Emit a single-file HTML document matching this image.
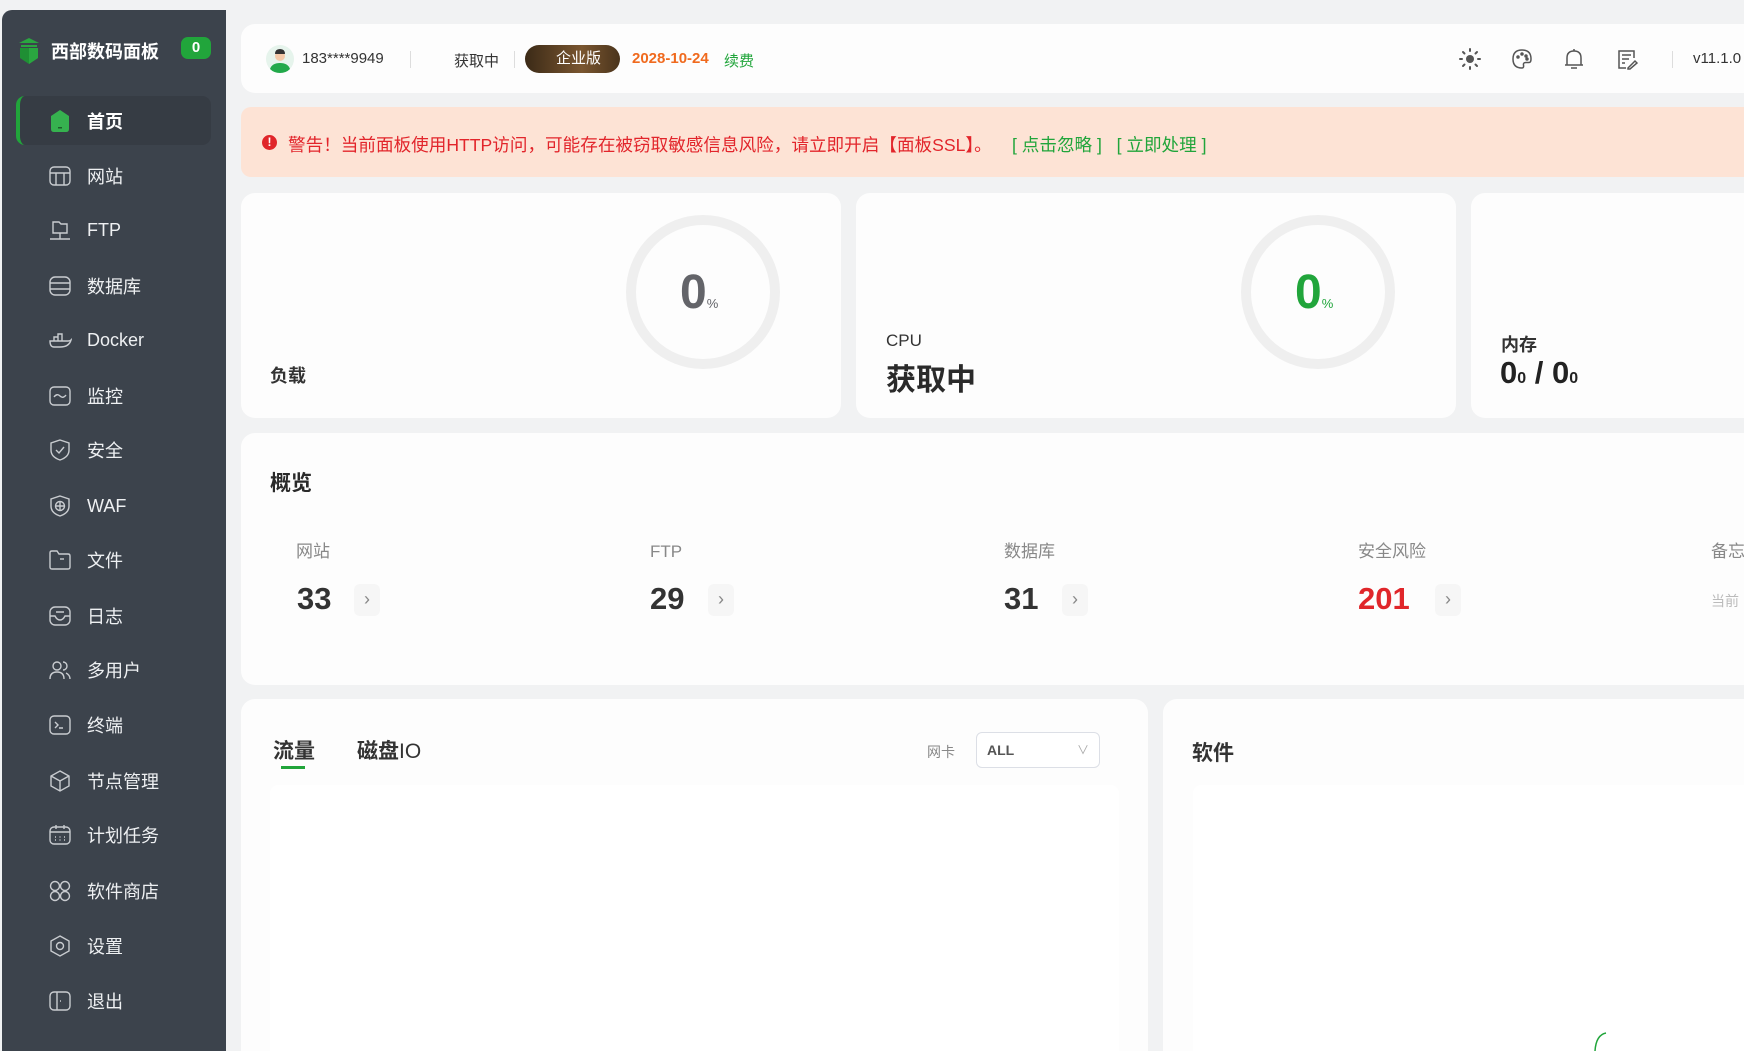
<!DOCTYPE html>
<html><head><meta charset="utf-8"><style>
*{margin:0;padding:0;box-sizing:border-box}
html,body{width:1744px;height:1051px;overflow:hidden}
body{background:#f1f2f3;font-family:"Liberation Sans","Noto Sans CJK SC",sans-serif;position:relative;color:#333}
.abs{position:absolute;white-space:nowrap}
.sb{left:2px;top:10px;width:224px;height:1041px;background:#3c434c;border-radius:10px 0 0 0}
.mi{position:absolute;left:0;width:224px;height:50px;display:flex;align-items:center;color:#eef0f2;font-size:18px}
.mi svg{position:absolute;left:46px;width:24px;height:24px;fill:none;stroke:#c9ccd0;stroke-width:1.4}
.mi span{position:absolute;left:85px}
.card{position:absolute;background:#fdfdfd;border-radius:14px}
.circ{position:absolute;width:154px;height:154px;border-radius:50%;border:10px solid #efefef}
.lbl{position:absolute;font-size:17px;color:#888;white-space:nowrap;line-height:20px}
.num{position:absolute;font-size:31px;font-weight:bold;color:#333}
.arr{position:absolute;width:26px;height:32px;background:#f6f6f6;border-radius:6px;color:#888;font-size:18px;text-align:center;line-height:30px}
</style></head><body>
<div class="abs sb">
  <svg class="abs" style="left:15px;top:27px" width="24" height="28" viewBox="0 0 24 28"><path d="M2 6 L12 1 L22 6 Z" fill="#2aa640"/><rect x="4" y="8" width="16" height="2" fill="#2aa640"/><path d="M3 11 H21 V21 L12 27 L3 21Z" fill="#1f8f34"/><path d="M12 11 V27 L21 21 V11Z" fill="#2aa640"/></svg>
  <div class="abs" style="left:49px;top:28px;color:#fff;font-size:18px;font-weight:bold">西部数码面板</div>
  <div class="abs" style="left:179px;top:27px;width:30px;height:22px;background:#21a53b;border-radius:7px;color:#fff;font-weight:bold;font-size:15px;text-align:center;line-height:22px">0</div>
  <div class="abs" style="left:14px;top:86px;width:195px;height:49px;background:#363c44;border-radius:9px;border-left:4px solid #21a53b"></div>
  <div class="mi" style="top:86px"><svg viewBox="0 0 24 24" style="stroke:none"><path d="M12 1 L21 7 V20 Q21 23 18 23 H6 Q3 23 3 20 V7Z" fill="#36b24f"/><rect x="10" y="18" width="4" height="1.5" fill="#1d5e2a"/></svg><span style="font-weight:bold;color:#fff">首页</span></div>
  <div class="mi" style="top:141px"><svg viewBox="0 0 24 24"><rect x="2" y="3" width="20" height="18" rx="4"/><path d="M2 9H22M8 9V21M16 9V21"/></svg><span>网站</span></div>
  <div class="mi" style="top:195px"><svg viewBox="0 0 24 24"><path d="M5 4H11L13 6H19V15H5Z"/><path d="M2 21H22M12 15V21"/></svg><span>FTP</span></div>
  <div class="mi" style="top:251px"><svg viewBox="0 0 24 24"><rect x="2" y="3" width="20" height="18" rx="5"/><path d="M2 9H22M2 15H22"/></svg><span>数据库</span></div>
  <div class="mi" style="top:305px"><svg viewBox="0 0 24 24"><path d="M2 13H20Q22 13 23 12Q21 19 12 19H6Q2 19 2 13Z"/><path d="M6 13V9H10V13M10 9V6H14V13"/></svg><span>Docker</span></div>
  <div class="mi" style="top:361px"><svg viewBox="0 0 24 24"><rect x="2" y="3" width="20" height="18" rx="4"/><path d="M6 13Q9 9 12 12T18 11"/></svg><span>监控</span></div>
  <div class="mi" style="top:415px"><svg viewBox="0 0 24 24"><path d="M12 2L21 5V12Q21 19 12 22Q3 19 3 12V5Z"/><path d="M8 12L11 15L16 9"/></svg><span>安全</span></div>
  <div class="mi" style="top:471px"><svg viewBox="0 0 24 24"><path d="M12 2L21 5V12Q21 19 12 22Q3 19 3 12V5Z"/><circle cx="12" cy="12" r="4.5"/><path d="M7.5 12H16.5M12 7.5V16.5"/></svg><span>WAF</span></div>
  <div class="mi" style="top:525px"><svg viewBox="0 0 24 24"><path d="M2 5Q2 3 4 3H9L11 6H20Q22 6 22 8V19Q22 21 20 21H4Q2 21 2 19Z"/><path d="M12 11H16"/></svg><span>文件</span></div>
  <div class="mi" style="top:581px"><svg viewBox="0 0 24 24"><rect x="2" y="3" width="20" height="18" rx="5"/><path d="M2 12H7Q9 16 12 16T17 12H22M8 8H16"/></svg><span>日志</span></div>
  <div class="mi" style="top:635px"><svg viewBox="0 0 24 24"><circle cx="9" cy="8" r="4"/><path d="M2 21Q2 14 9 14Q16 14 16 21M15 4A4 4 0 0 1 15 12M18 15Q22 17 22 21"/></svg><span>多用户</span></div>
  <div class="mi" style="top:690px"><svg viewBox="0 0 24 24"><rect x="2" y="3" width="20" height="18" rx="4"/><path d="M7 9L10 12L7 15M11 15H15"/></svg><span>终端</span></div>
  <div class="mi" style="top:746px"><svg viewBox="0 0 24 24"><path d="M12 2L21 7V17L12 22L3 17V7Z"/><path d="M3 7L12 12L21 7M12 12V22"/></svg><span>节点管理</span></div>
  <div class="mi" style="top:800px"><svg viewBox="0 0 24 24"><rect x="2" y="4" width="20" height="17" rx="4"/><path d="M2 9H22M8 2V6M16 2V6M7 14H8M11.5 14H12.5M16 14H17M7 17H8M11.5 17H12.5M16 17H17"/></svg><span>计划任务</span></div>
  <div class="mi" style="top:856px"><svg viewBox="0 0 24 24"><circle cx="7" cy="7" r="4.5"/><circle cx="17" cy="7" r="4.5"/><circle cx="7" cy="17" r="4.5"/><circle cx="17" cy="17" r="4.5"/></svg><span>软件商店</span></div>
  <div class="mi" style="top:911px"><svg viewBox="0 0 24 24"><path d="M12 2L21 7V17L12 22L3 17V7Z"/><circle cx="12" cy="12" r="3.5"/></svg><span>设置</span></div>
  <div class="mi" style="top:966px"><svg viewBox="0 0 24 24"><rect x="2" y="3" width="20" height="18" rx="4"/><path d="M9 3V21M12 12H13"/></svg><span>退出</span></div>
</div>

<!-- header -->
<div class="card" style="left:241px;top:24px;width:1520px;height:69px"></div>
<svg class="abs" style="left:266px;top:45px" width="28" height="28" viewBox="0 0 28 28"><circle cx="14" cy="14" r="14" fill="#e6f4ec"/><circle cx="14" cy="11" r="5" fill="#f3c9a8"/><path d="M9 9Q9 4 14 4Q19 4 19 9Z" fill="#333"/><path d="M4 24Q6 18 14 18Q22 18 24 24Q20 28 14 28Q8 28 4 24Z" fill="#22a94a"/></svg>
<div class="abs" style="left:302px;top:50px;font-size:15px;color:#333">183****9949</div>
<div class="abs" style="left:410px;top:51px;width:1px;height:17px;background:#ddd"></div>
<div class="abs" style="left:454px;top:50px;font-size:15px;color:#333">获取中</div>
<div class="abs" style="left:514px;top:51px;width:1px;height:17px;background:#ddd"></div>
<div class="abs" style="left:525px;top:45px;width:95px;height:28px;border-radius:14px;background:linear-gradient(90deg,#3b2a17,#7a5630 60%,#4a341c);color:#fff;font-size:15px;text-align:center;line-height:28px;padding-left:12px">企业版</div>
<div class="abs" style="left:632px;top:50px;font-size:15px;color:#f06a1e;font-weight:bold">2028-10-24</div>
<div class="abs" style="left:724px;top:50px;font-size:15px;color:#21a53b">续费</div>
<svg class="abs" style="left:1459px;top:48px" width="22" height="22" viewBox="0 0 22 22" stroke="#555" stroke-width="2" stroke-linecap="round"><circle cx="11" cy="11" r="4" fill="#555" stroke="none"/><path d="M11 1V3M11 19V21M1 11H3M19 11H21M4 4L5.5 5.5M16.5 16.5L18 18M4 18L5.5 16.5M16.5 5.5L18 4"/></svg>
<svg class="abs" style="left:1511px;top:48px" width="22" height="22" viewBox="0 0 22 22" fill="none" stroke="#555" stroke-width="1.5"><path d="M11 2Q2 2 2 11Q2 20 11 20Q13 20 12.5 17Q12 14.5 15 14.5H18Q20 14.5 20 11Q20 2 11 2Z"/><circle cx="7" cy="9" r="1" fill="#555"/><circle cx="11" cy="6" r="1" fill="#555"/><circle cx="15" cy="8" r="1" fill="#555"/><circle cx="16" cy="11" r="1" fill="#555"/></svg>
<svg class="abs" style="left:1563px;top:47px" width="22" height="24" viewBox="0 0 22 24" fill="none" stroke="#555" stroke-width="1.5"><path d="M4 18V11Q4 4 11 4Q18 4 18 11V18H2H20"/><path d="M11 2V4M8 21H14"/></svg>
<svg class="abs" style="left:1616px;top:48px" width="22" height="22" viewBox="0 0 22 22" fill="none" stroke="#555" stroke-width="1.5"><path d="M18 10V3H3V20H10"/><path d="M6 7H15M6 11H13M6 15H9M12 20L19 13L21 15L14 21H12Z"/></svg>
<div class="abs" style="left:1672px;top:51px;width:1px;height:17px;background:#ddd"></div>
<div class="abs" style="left:1693px;top:50px;font-size:15px;color:#333">v11.1.0</div>

<!-- alert -->
<div class="abs" style="left:241px;top:107px;width:1520px;height:70px;background:#fde3d5;border-radius:10px"></div>
<div class="abs" style="left:262px;top:135px;width:15px;height:15px;border-radius:50%;background:#e0262a;color:#fff;font-size:12px;font-weight:bold;text-align:center;line-height:15px">!</div>
<div class="abs" style="left:288px;top:132px;font-size:17.6px;color:#e2252b">警告！当前面板使用HTTP访问，可能存在被窃取敏感信息风险，请立即开启【面板SSL】。</div>
<div class="abs" style="left:1012px;top:132px;font-size:17.6px;color:#21a53b">[ 点击忽略 ]&nbsp;&nbsp;&nbsp;[ 立即处理 ]</div>

<!-- stat cards -->
<div class="card" style="left:241px;top:193px;width:600px;height:225px"></div>
<div class="card" style="left:856px;top:193px;width:600px;height:225px"></div>
<div class="card" style="left:1471px;top:193px;width:300px;height:225px"></div>
<div class="circ" style="left:626px;top:215px"></div>
<div class="abs" style="left:680px;top:265px;font-size:48px;font-weight:900;color:#636469">0<span style="font-size:13px;font-weight:normal">%</span></div>
<div class="abs" style="left:270px;top:362px;font-size:18px;font-weight:bold">负载</div>
<div class="circ" style="left:1241px;top:215px"></div>
<div class="abs" style="left:1295px;top:265px;font-size:48px;font-weight:900;color:#21a53b">0<span style="font-size:13px;font-weight:normal">%</span></div>
<div class="abs" style="left:886px;top:331px;font-size:17px">CPU</div>
<div class="abs" style="left:886px;top:355px;font-size:30px;font-weight:bold;color:#2a2a2a">获取中</div>
<div class="abs" style="left:1501px;top:331px;font-size:18px;font-weight:bold">内存</div>
<div class="abs" style="left:1500px;top:355px;font-size:31px;font-weight:900;color:#222">0<span style="font-size:16px">0</span> / 0<span style="font-size:16px">0</span></div>

<!-- overview -->
<div class="card" style="left:241px;top:433px;width:1520px;height:252px"></div>
<div class="abs" style="left:270px;top:467px;font-size:21px;font-weight:bold;color:#2a2a2a">概览</div>
<div class="lbl" style="left:296px;top:542px">网站</div>
<div class="lbl" style="left:650px;top:542px">FTP</div>
<div class="lbl" style="left:1004px;top:542px">数据库</div>
<div class="lbl" style="left:1358px;top:542px">安全风险</div>
<div class="lbl" style="left:1711px;top:542px">备忘录</div>
<div class="abs" style="left:1711px;top:591px;font-size:14px;color:#bbb">当前</div>
<div class="num" style="left:297px;top:581px">33</div><div class="arr" style="left:354px;top:584px">›</div>
<div class="num" style="left:650px;top:581px">29</div><div class="arr" style="left:708px;top:584px">›</div>
<div class="num" style="left:1004px;top:581px">31</div><div class="arr" style="left:1062px;top:584px">›</div>
<div class="num" style="left:1358px;top:581px;color:#e0262a">201</div><div class="arr" style="left:1435px;top:584px">›</div>

<!-- bottom -->
<div class="card" style="left:241px;top:699px;width:907px;height:352px;border-radius:14px 14px 0 0"></div>
<div class="card" style="left:1163px;top:699px;width:600px;height:352px;border-radius:14px 0 0 0"></div>
<div class="abs" style="left:273px;top:735px;font-size:21px;font-weight:bold">流量</div>
<div class="abs" style="left:281px;top:766px;width:24px;height:3px;background:#21a53b"></div>
<div class="abs" style="left:357px;top:735px;font-size:21px;font-weight:bold">磁盘<span style="font-weight:normal">IO</span></div>
<div class="abs" style="left:927px;top:742px;font-size:14px;color:#888">网卡</div>
<div class="abs" style="left:976px;top:732px;width:124px;height:36px;border:1px solid #dcdfe6;border-radius:6px;background:#fff"><span style="position:absolute;left:10px;top:9px;font-size:14px;font-weight:bold;color:#555">ALL</span><span style="position:absolute;right:10px;top:8px;font-size:12px;color:#aaa">∨</span></div>
<div class="abs" style="left:270px;top:785px;width:849px;height:266px;background:#fff;border-radius:8px 8px 0 0"></div>
<div class="abs" style="left:1192px;top:737px;font-size:21px;font-weight:bold">软件</div>
<div class="abs" style="left:1193px;top:785px;width:560px;height:266px;background:#fff;border-radius:8px 0 0 0"></div>
<svg class="abs" style="left:1590px;top:1030px" width="30" height="21" viewBox="0 0 30 21" fill="none" stroke="#21a53b" stroke-width="1.5"><path d="M16 3Q6 5 5 21"/></svg>
</body></html>
